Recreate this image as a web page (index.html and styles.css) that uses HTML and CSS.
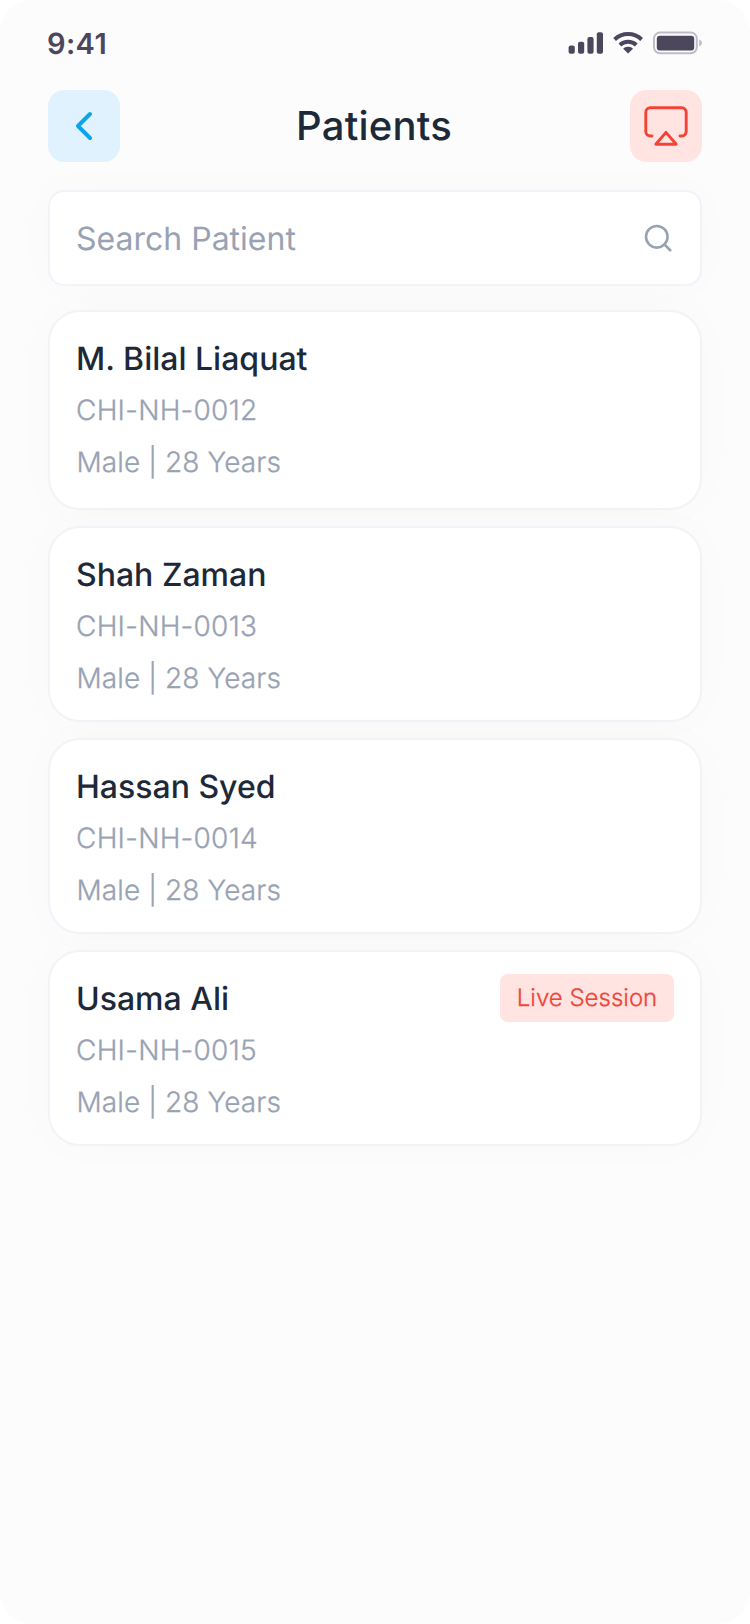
FILE: index.html
```html
<!DOCTYPE html>
<html lang="en">
<head>
<meta charset="utf-8">
<title>Patients</title>
<link rel="stylesheet" href="styles.css">
</head>
<body>
<div class="screen">
  <div class="status">
    <span class="time">9:41</span>
    <svg class="indicators" width="136" height="24" viewBox="567 31 136 24">
      <g fill="#4c475c">
        <rect x="568.6" y="45.4" width="6.2" height="8.3" rx="2"/>
        <rect x="578" y="41.7" width="6.2" height="12" rx="2"/>
        <rect x="587.4" y="36.9" width="6.2" height="16.8" rx="2"/>
        <rect x="596.8" y="32.3" width="6.2" height="21.4" rx="2"/>
        <rect x="656.8" y="35.7" width="37.4" height="14.8" rx="3"/>
        <path d="M628.1 53.6l-4.4-4.4c-.4-.4-.3-.9.1-1.2 2.6-1.8 6-1.8 8.6 0 .4.3.5.8.1 1.2z"/>
      </g>
      <g fill="none" stroke="#4c475c" stroke-width="4">
        <path d="M614.6 39.5c7.6-7.2 19.4-7.2 27 0"/>
        <path d="M619.9 45c4.6-4.2 11.8-4.2 16.4 0"/>
      </g>
      <rect x="654" y="32.6" width="42.8" height="20.7" rx="6" fill="none" stroke="#bebcc7" stroke-width="2"/>
      <path d="M699.2 39.6c3.6 1.3 3.6 5.5 0 6.8z" fill="#bebcc7"/>
    </svg>
  </div>

  <header class="header">
    <button class="square back" aria-label="Back">
      <svg width="72" height="72" viewBox="0 0 72 72" fill="none" stroke="#0ba5ec" stroke-width="4" stroke-linecap="round" stroke-linejoin="round"><path d="M42 24L30 36l12 12"/></svg>
    </button>
    <h1 class="title">Patients</h1>
    <button class="square cast" aria-label="Cast">
      <svg width="72" height="72" viewBox="0 0 72 72" fill="none" stroke="#f44336" stroke-width="2.9" stroke-linecap="round" stroke-linejoin="round"><path d="M22 46h-1.7a4.5 4.5 0 0 1-4.5-4.5V22.2a4.5 4.5 0 0 1 4.5-4.5h31.4a4.5 4.5 0 0 1 4.5 4.5v19.3a4.5 4.5 0 0 1-4.5 4.5H50M36 42.4L46.2 54.2H25.8z"/></svg>
    </button>
  </header>

  <div class="search">
    <span class="placeholder">Search Patient</span>
    <svg class="glass" width="32" height="32" viewBox="642 222 32 32" fill="none" stroke="#98a2b3" stroke-width="2.6" stroke-linecap="round"><circle cx="656.8" cy="236.8" r="10.8"/><path d="M664.5 244.5l5.8 5.8"/></svg>
  </div>

  <main class="list">
    <article class="card tall">
      <div class="top"><h2 class="name">M. Bilal Liaquat</h2></div>
      <p class="code">CHI-NH-0012</p>
      <p class="info">Male | 28 Years</p>
    </article>
    <article class="card">
      <div class="top"><h2 class="name">Shah Zaman</h2></div>
      <p class="code">CHI-NH-0013</p>
      <p class="info">Male | 28 Years</p>
    </article>
    <article class="card">
      <div class="top"><h2 class="name">Hassan Syed</h2></div>
      <p class="code">CHI-NH-0014</p>
      <p class="info">Male | 28 Years</p>
    </article>
    <article class="card">
      <div class="top"><h2 class="name">Usama Ali</h2><span class="badge">Live Session</span></div>
      <p class="code">CHI-NH-0015</p>
      <p class="info">Male | 28 Years</p>
    </article>
  </main>
</div>
</body>
</html>
```
FILE: styles.css
```css
* { box-sizing: border-box; margin: 0; padding: 0; }
body { background: #fff; font-family: Inter, "Liberation Sans", sans-serif; text-rendering: geometricPrecision; }
.screen { width: 750px; height: 1624px; padding: 0 48px; background: #fcfcfc; border-radius: 32px; overflow: hidden; }
.status { height: 90px; padding-top: 24px; display: flex; justify-content: space-between; align-items: flex-start; margin-left: -1px; margin-right: -1px; }
.time { font-size: 29px; line-height: 39px; font-weight: 600; letter-spacing: .4px; color: #4c475c; }
.indicators { margin-top: 7px; display: block; }
.header { display: flex; justify-content: space-between; align-items: center; height: 72px; }
.square { width: 72px; height: 72px; border: 0; border-radius: 16px; }
.square svg { display: block; }
.back { background: #e0f2fe; }
.cast { background: #ffe4e2; }
.title { padding-right: 2px; font-size: 40px; line-height: 60px; font-weight: 500; letter-spacing: .2px; color: #1d2939; }
.search, .card { background: #fff; border: 2px solid #f2f2f8; box-shadow: 0 0 48px rgba(0, 0, 0, .02); }
.search { margin-top: 28px; height: 96px; border-radius: 16px; padding: 0 26px; display: flex; align-items: center; justify-content: space-between; }
.placeholder { padding-top: 2px; font-size: 32px; line-height: 48px; font-weight: 400; color: #98a2b3; }
.list { margin-top: 24px; display: flex; flex-direction: column; gap: 16px; }
.card { height: 196px; border-radius: 32px; padding: 22px 26px; }
.tall { height: 200px; }
.top { display: flex; justify-content: space-between; height: 48px; }
.name { font-size: 32px; line-height: 50px; font-weight: 500; color: #1d2939; }
.code, .info { font-size: 28px; line-height: 42px; font-weight: 300; color: #98a2b3; -webkit-text-stroke: .3px #98a2b3; }
.code { margin-top: 7px; letter-spacing: .25px; }
.info { margin-top: 10px; padding-left: .5px; letter-spacing: .1px; }
.badge { width: 174px; height: 48px; border-radius: 8px; background: #ffe4e2; color: #f04438; font-size: 24px; line-height: 48px; font-weight: 300; text-align: center; -webkit-text-stroke: .3px #f04438; }
```
